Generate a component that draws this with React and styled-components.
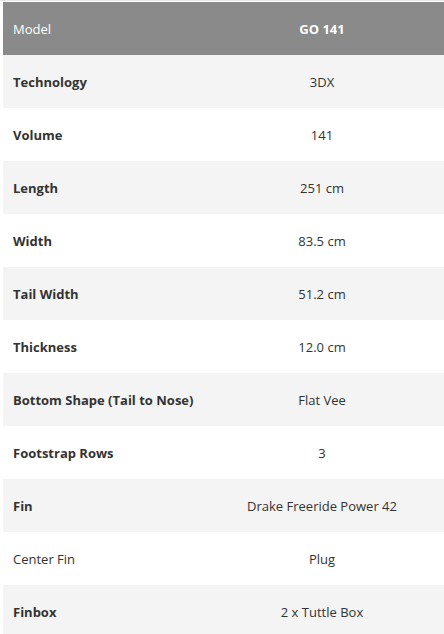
import React from 'react'
import styled, { createGlobalStyle } from 'styled-components'

const GlobalStyle = createGlobalStyle`
    body {
        margin: 0;
        background: #ffffff;
        font-family: 'Open Sans', 'Liberation Sans', sans-serif;
    }
`

const Wrapper = styled.div`
    padding: 1px 0 0 3px;
    background: #ffffff;
    border-top: 1px solid #e6e6e6;
    box-sizing: border-box;
    width: 444px;
    height: 634px;
    overflow: hidden;
`

const SpecTable = styled.table`
    width: 441px;
    border-collapse: collapse;
    table-layout: fixed;
    font-size: 13px;
    color: #333333;
`

const Row = styled.tr`
    height: 53px;
    background: ${(p) => (p.$head ? '#8a8a8a' : p.$shade ? '#f4f4f4' : '#ffffff')};
    color: ${(p) => (p.$head ? '#ffffff' : '#333333')};
`

const Label = styled.td`
    width: 187px;
    padding: 0 0 0 10px;
    font-weight: ${(p) => (p.$plain ? 400 : 700)};
    white-space: nowrap;
`

const Value = styled.td`
    text-align: center;
    padding: 0;
    font-weight: ${(p) => (p.$bold ? 700 : 400)};
`

const specs = [
    ['Technology', '3DX'],
    ['Volume', '141'],
    ['Length', '251 cm'],
    ['Width', '83.5 cm'],
    ['Tail Width', '51.2 cm'],
    ['Thickness', '12.0 cm'],
    ['Bottom Shape (Tail to Nose)', 'Flat Vee'],
    ['Footstrap Rows', '3'],
    ['Fin', 'Drake Freeride Power 42'],
    ['Center Fin', 'Plug', true],
    ['Finbox', '2 x Tuttle Box'],
]

const App = () => {
    return (
        <Wrapper>
            <GlobalStyle />
            <SpecTable>
                <tbody>
                    <Row $head>
                        <Label $plain>Model</Label>
                        <Value $bold>GO 141</Value>
                    </Row>
                    {specs.map(([name, value, plain], i) => (
                        <Row key={name} $shade={i % 2 === 0}>
                            <Label $plain={plain}>{name}</Label>
                            <Value>{value}</Value>
                        </Row>
                    ))}
                </tbody>
            </SpecTable>
        </Wrapper>
    )
}

export default App
